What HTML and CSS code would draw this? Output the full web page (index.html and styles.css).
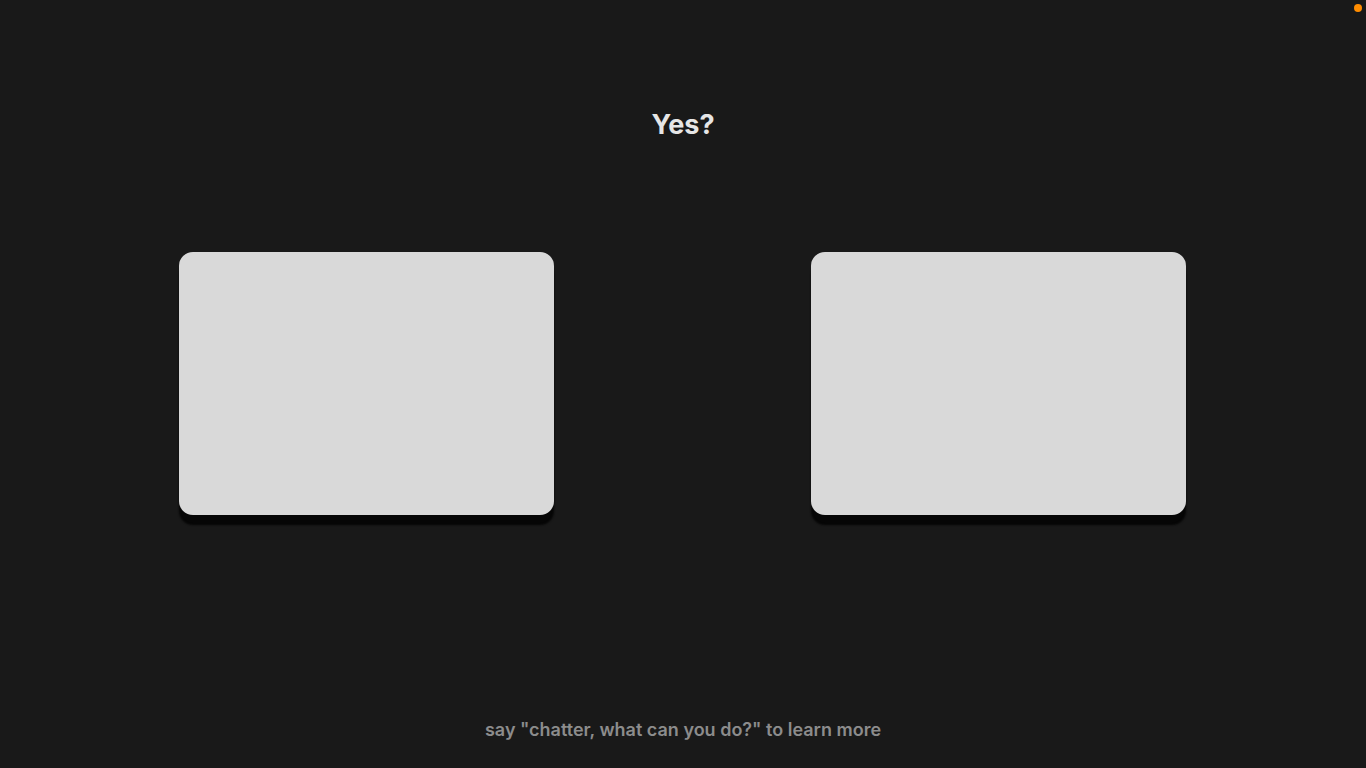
FILE: index.html
```html
<!DOCTYPE html>
<html lang="en">
<head>
    <meta charset="UTF-8">
    <meta name="viewport" content="width=device-width, initial-scale=1.0">
    <title>Chatter</title>
    <link rel="stylesheet" href="styles.css">
</head>
<body>
    <div class="status-dot"></div>
    <main class="screen">
        <h1 class="prompt">Yes?</h1>
        <div class="cards">
            <div class="card"></div>
            <div class="card"></div>
        </div>
        <p class="hint">say "chatter, what can you do?" to learn more</p>
    </main>
</body>
</html>
```

FILE: styles.css
```css
html, body {
    margin: 0;
    padding: 0;
    height: 100%;
}

body {
    background-color: #191919;
    font-family: Inter, "Noto Sans", sans-serif;
    overflow: hidden;
}

.status-dot {
    position: absolute;
    top: 4px;
    right: 4px;
    width: 8px;
    height: 8px;
    border-radius: 50%;
    background: #ff8c00;
}

.screen {
    height: 100vh;
    display: flex;
    flex-direction: column;
    align-items: center;
}

.prompt {
    margin: 107px 0 0;
    font-size: 27px;
    font-weight: 700;
    line-height: 36px;
    color: #e6e6e6;
}

.cards {
    display: flex;
    gap: 257px;
    margin-top: 109px;
    padding-right: 1px;
}

.card {
    width: 375px;
    height: 263px;
    background: #d9d9d9;
    border-radius: 14px;
    box-shadow: 0 10px 2px #060606;
}

.hint {
    margin: auto 0 26px;
    font-size: 18px;
    font-weight: 600;
    line-height: 24px;
    color: #8c8c8c;
}
```
